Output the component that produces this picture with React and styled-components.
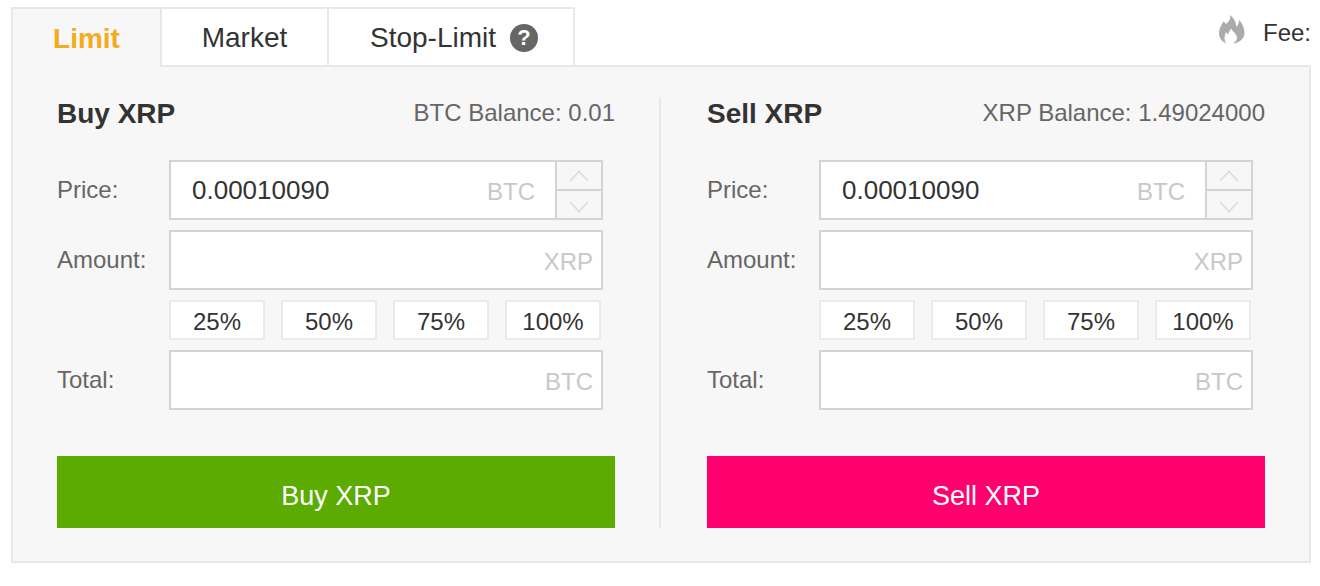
import styled, { createGlobalStyle } from "styled-components";

const GlobalStyle = createGlobalStyle`
  html, body {
    margin: 0;
    padding: 0;
    background: #fff;
    font-family: "Liberation Sans", Arial, sans-serif;
    color: #333;
  }
`;

const percents = ["25%", "50%", "75%", "100%"];

function Stepper() {
  return (
    <StepBox>
      <StepButton>
        <svg width="20" height="12" viewBox="0 0 20 12">
          <path d="M1 11 L10 1.5 L19 11" fill="none" stroke="#dcdcdc" strokeWidth="1.6" />
        </svg>
      </StepButton>
      <StepButton $down>
        <svg width="20" height="12" viewBox="0 0 20 12">
          <path d="M1 1 L10 10.5 L19 1" fill="none" stroke="#dcdcdc" strokeWidth="1.6" />
        </svg>
      </StepButton>
    </StepBox>
  );
}

function Field({ label, unit, value, stepper }) {
  return (
    <Row>
      <Label>{label}</Label>
      <InputBox>
        <Value>{value}</Value>
        <Unit>{unit}</Unit>
        {stepper && <Stepper />}
      </InputBox>
    </Row>
  );
}

function OrderForm({ side, balance, color }) {
  return (
    <Form>
      <FormHead>
        <FormTitle>{side} XRP</FormTitle>
        <Balance>{balance}</Balance>
      </FormHead>
      <Fields>
        <Field label="Price:" unit="BTC" value="0.00010090" stepper />
        <Field label="Amount:" unit="XRP" />
        <PercentRow>
          {percents.map((p) => (
            <Percent key={p}>{p}</Percent>
          ))}
        </PercentRow>
        <Field label="Total:" unit="BTC" />
      </Fields>
      <Submit $color={color}>{side} XRP</Submit>
    </Form>
  );
}

export default function App() {
  return (
    <Page>
      <GlobalStyle />
      <TopBar>
        <Tabs>
          <Tab $active $width={151}>Limit</Tab>
          <Tab $width={167}>Market</Tab>
          <Tab $width={246} $pad={6}>
            Stop-Limit
            <Help>?</Help>
          </Tab>
        </Tabs>
        <FeeBox>
          <svg width="26" height="29" viewBox="0 0 26 29">
            <path
              fill="#ababab"
              d="M11 0 C12 4 10 6 7 9 C6 8 5 7 5 6 C2 10 0 14 0 18 C0 22 2 26 7 28.5 C5 25 5 21 7 17 C8 18 8.5 19 9 19.5 C10 17 11 15 12 13.5 C14 17 18 19 18 23 C18 25 16.5 27 14 28.5 C20 28 25.5 24 25.5 18 C25.5 13 23 8 20 5 C20 7 19.5 10 17.5 12 C17 7 15 3 11 0 Z"
            />
          </svg>
          <FeeText>Fee:</FeeText>
        </FeeBox>
      </TopBar>
      <Panel>
        <OrderForm side="Buy" balance="BTC Balance: 0.01" color="#5cab00" />
        <Divider />
        <OrderForm side="Sell" balance="XRP Balance: 1.49024000" color="#ff006e" />
      </Panel>
    </Page>
  );
}

const Page = styled.div`
  width: 1320px;
  height: 586px;
  padding: 7px 9px 0 11px;
  box-sizing: border-box;
  overflow: hidden;
`;

const TopBar = styled.div`
  display: flex;
  justify-content: space-between;
  height: 58px;
`;

const Tabs = styled.div`
  display: flex;
`;

const Tab = styled.div`
  box-sizing: border-box;
  width: ${(p) => p.$width}px;
  height: 60px;
  display: flex;
  align-items: center;
  justify-content: center;
  gap: 14px;
  font-size: 28px;
  padding-top: 1px;
  padding-left: ${(p) => p.$pad || 0}px;
  font-weight: ${(p) => (p.$active ? 700 : 400)};
  color: ${(p) => (p.$active ? "#f5ab1c" : "#333")};
  background: ${(p) => (p.$active ? "#f7f7f7" : "#fff")};
  border-top: 2px solid #e8e8e8;
  border-left: ${(p) => (p.$active ? "2px solid #e8e8e8" : "none")};
  border-right: 2px solid #e8e8e8;
  border-bottom: ${(p) => (p.$active ? "none" : "2px solid #e8e8e8")};
  position: relative;
  z-index: 1;
`;

const Help = styled.span`
  width: 28px;
  height: 28px;
  border-radius: 50%;
  background: #666;
  color: #fff;
  font-size: 22px;
  font-weight: 700;
  display: flex;
  align-items: center;
  justify-content: center;
`;

const FeeBox = styled.div`
  display: flex;
  align-items: flex-start;
  gap: 18px;
  padding-top: 8px;
`;

const FeeText = styled.span`
  font-size: 24px;
  line-height: 36px;
  color: #333;
`;

const Panel = styled.div`
  box-sizing: border-box;
  width: 1300px;
  height: 498px;
  background: #f7f7f7;
  border: 2px solid #e8e8e8;
  padding: 30px 44px 33px;
  display: flex;
`;

const Divider = styled.div`
  width: 2px;
  background: #e8e8e8;
  margin: 0 46px 0 44px;
`;

const Form = styled.div`
  width: 558px;
  display: flex;
  flex-direction: column;
`;

const FormHead = styled.div`
  display: flex;
  justify-content: space-between;
  align-items: center;
  height: 34px;
  margin-bottom: 29px;
`;

const FormTitle = styled.div`
  font-size: 28px;
  font-weight: 700;
  color: #333;
`;

const Balance = styled.div`
  font-size: 24px;
  color: #666;
  margin-top: -2px;
`;

const Fields = styled.div`
  display: flex;
  flex-direction: column;
  gap: 10px;
`;

const Row = styled.div`
  display: flex;
  align-items: center;
`;

const Label = styled.div`
  width: 112px;
  font-size: 24px;
  color: #666;
`;

const InputBox = styled.div`
  box-sizing: border-box;
  width: 434px;
  height: 60px;
  display: flex;
  align-items: center;
  background: #fff;
  border: 2px solid #d4d4d4;
`;

const Value = styled.div`
  flex: 1;
  padding-left: 21px;
  font-size: 26px;
  color: #333;
`;

const Unit = styled.div`
  padding-right: 8px;
  padding-top: 4px;
  font-size: 24px;
  color: #c8c8c8;
  &:not(:last-child) {
    padding-right: 20px;
  }
`;

const StepBox = styled.div`
  box-sizing: border-box;
  width: 46px;
  align-self: stretch;
  display: flex;
  flex-direction: column;
  background: #f7f7f7;
  border-left: 2px solid #d4d4d4;
`;

const StepButton = styled.div`
  box-sizing: border-box;
  height: ${(p) => (p.$down ? 27 : 29)}px;
  display: flex;
  align-items: center;
  justify-content: center;
  padding-top: ${(p) => (p.$down ? 5 : 0)}px;
  border-bottom: ${(p) => (p.$down ? "none" : "2px solid #d4d4d4")};
`;

const PercentRow = styled.div`
  display: flex;
  gap: 16px;
  margin-left: 112px;
`;

const Percent = styled.div`
  box-sizing: border-box;
  width: 96px;
  height: 40px;
  padding-top: 4px;
  display: flex;
  align-items: center;
  justify-content: center;
  background: #fff;
  border: 2px solid #ebebeb;
  font-size: 24px;
  color: #333;
`;

const Submit = styled.div`
  margin-top: 46px;
  height: 72px;
  padding-top: 8px;
  box-sizing: border-box;
  display: flex;
  align-items: center;
  justify-content: center;
  background: ${(p) => p.$color};
  color: #fff;
  font-size: 27px;
`;
